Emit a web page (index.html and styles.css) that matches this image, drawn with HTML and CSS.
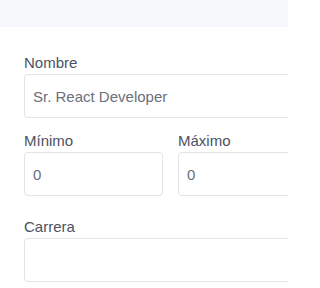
FILE: index.html
```html
<!DOCTYPE html>
<html lang="es">
<head>
<meta charset="utf-8">
<link rel="stylesheet" href="styles.css">
</head>
<body>
<div class="page">
  <div class="topbar"></div>
  <form class="form">
    <div class="group">
      <label class="label" for="nombre">Nombre</label>
      <input class="field" id="nombre" type="text" value="Sr. React Developer">
    </div>
    <div class="row">
      <div class="group">
        <label class="label" for="min">Mínimo</label>
        <input class="field" id="min" type="text" value="0">
      </div>
      <div class="group">
        <label class="label" for="max">Máximo</label>
        <input class="field" id="max" type="text" value="0">
      </div>
    </div>
    <div class="group">
      <label class="label" for="carrera">Carrera</label>
      <input class="field" id="carrera" type="text" value="">
    </div>
  </form>
</div>
</body>
</html>
```
FILE: styles.css
```css
html, body {
  margin: 0;
  padding: 0;
  background: #ffffff;
  font-family: "Liberation Sans", Arial, sans-serif;
}
.page {
  width: 288px;
  height: 288px;
  overflow: hidden;
}
.topbar {
  height: 27px;
  background: #f7f8fc;
}
.form {
  width: 293px;
  padding: 27px 0 0 24px;
  display: flex;
  flex-direction: column;
}
.group {
  display: flex;
  flex-direction: column;
  margin-bottom: 14px;
}
.row {
  display: grid;
  grid-template-columns: 139px 139px;
  column-gap: 15px;
  margin-bottom: 8px;
}
.label {
  font-size: 15px;
  line-height: 18px;
  color: #4b5261;
  margin-bottom: 2px;
}
.field {
  box-sizing: border-box;
  height: 44px;
  width: 100%;
  margin: 0;
  padding: 0 8px;
  border: 1px solid #e1e4e8;
  border-radius: 4px;
  background: #ffffff;
  font-family: inherit;
  font-size: 15px;
  color: #6b7079;
  outline: none;
}
```
